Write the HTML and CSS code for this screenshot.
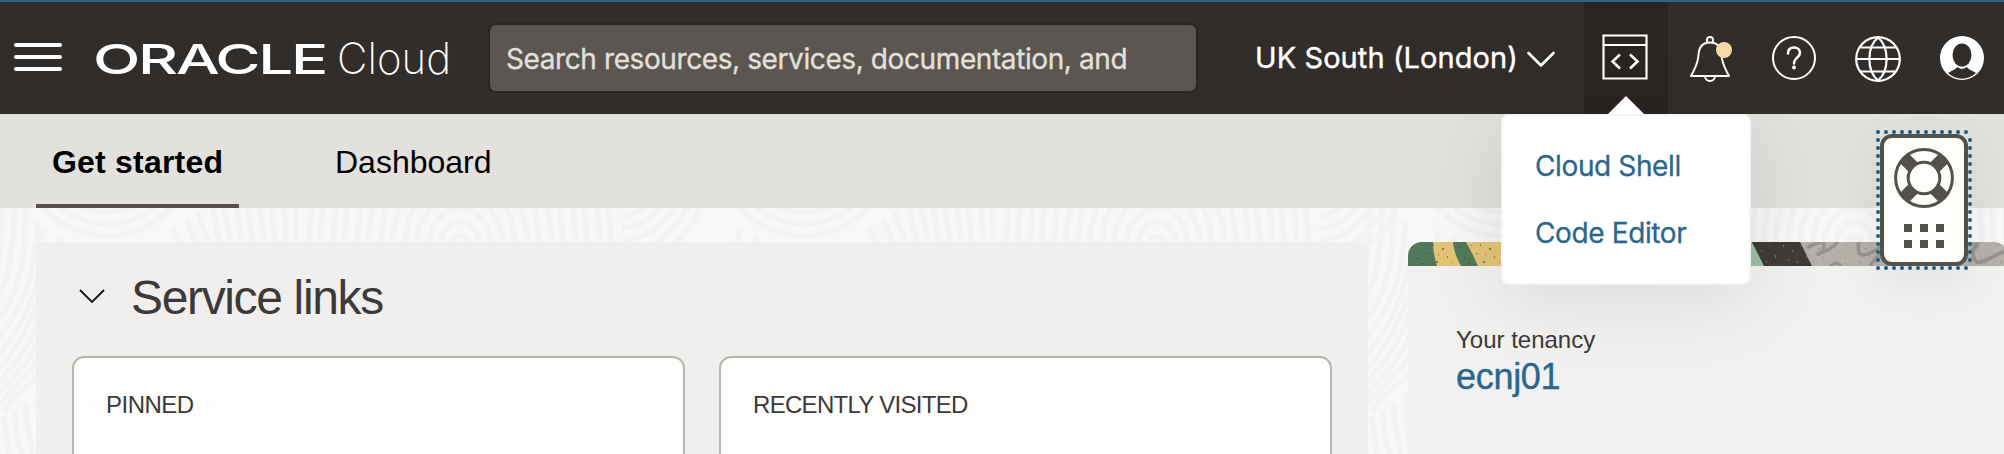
FILE: index.html
```html
<!DOCTYPE html>
<html lang="en">
<head>
<meta charset="utf-8">
<title>Oracle Cloud</title>
<link rel="stylesheet" href="styles.css">
</head>
<body>
<header class="topbar">
  <svg class="menu" width="48" height="28" viewBox="0 0 48 28"><path d="M2 2H46M2 14H46M2 26H46" stroke="#fff" stroke-width="4" stroke-linecap="round"/></svg>
  <svg class="brand" width="360" height="40" viewBox="0 0 360 40">
    <text class="brand-name" x="-3" y="34.500" textLength="233" lengthAdjust="spacingAndGlyphs">ORACLE</text>
    <text class="brand-sub" x="241" y="34.500" textLength="114" lengthAdjust="spacingAndGlyphs">Cloud</text>
  </svg>
  <div class="search">Search resources, services, documentation, and</div>
  <div class="region"><span class="region-name">UK South (London)</span>
    <svg width="28" height="17" viewBox="0 0 28 17"><path d="M1.500 2L14 14.500L26.500 2" fill="none" stroke="#fff" stroke-width="2.600" stroke-linecap="round" stroke-linejoin="round"/></svg>
  </div>
  <nav class="tools">
    <div class="tool tool-active">
      <svg class="code-icon" width="46" height="46" viewBox="0 0 46 46" fill="none" stroke="#fff" stroke-width="2.200"><path d="M1.500 1.500H44.500V44.500H1.500ZM1.500 11H44.500"/><path d="M18 20.500L10.500 27.500L18 34.500M28 20.500L35.500 27.500L28 34.500" stroke-width="2.600"/></svg>
      <div class="popup">
        <svg class="popup-arrow" width="36" height="18" viewBox="0 0 36 18"><path d="M18 0L36 18H0Z" fill="#fff"/></svg>
        <a class="popup-item">Cloud Shell</a>
        <a class="popup-item">Code Editor</a>
      </div>
    </div>
    <div class="tool">
      <svg width="48" height="48" viewBox="0 0 48 48" fill="none" stroke="#fff" stroke-width="2"><path d="M5 42H43C39 34 36 30 35.500 21C35 12 31 8.500 24 8.500S13 12 12.500 21C12 30 9 34 5 42Z" stroke-linejoin="round"/><path d="M21 8.500V6A3 3 0 0 1 27 6V8.500M19 42A5 5 0 0 0 29 42"/><circle cx="38" cy="16" r="8" fill="#f2dca5" stroke="none"/></svg>
    </div>
    <div class="tool">
      <svg width="46" height="46" viewBox="0 0 46 46" fill="none" stroke="#fff"><circle cx="23" cy="23" r="21" stroke-width="2"/><path d="M17 18.500C17 14.500 19.500 12.500 23 12.500S29 14.500 29 18C29 22.500 23 22.500 23 28.500" stroke-width="2.500" stroke-linecap="round"/><circle cx="23" cy="32.500" r="1.900" fill="#fff" stroke="none"/></svg>
    </div>
    <div class="tool">
      <svg width="46" height="48" viewBox="0 0 46 48" fill="none" stroke="#fff" stroke-width="2.200"><circle cx="23" cy="25" r="21.800"/><path d="M1.500 25H44.500M5.500 13.500H40.500M5.500 37.500H40.500"/><path d="M23 3.500C11.500 13 11.500 37 23 46.500C34.500 37 34.500 13 23 3.500Z"/></svg>
    </div>
    <div class="tool">
      <svg width="46" height="46" viewBox="0 0 46 46"><circle cx="23" cy="23" r="22" fill="#fff"/><ellipse cx="23" cy="20" rx="9.500" ry="11.500" fill="#312d2a"/><path d="M9 38C12.500 35.500 16 35 18.500 32C21.500 34.500 24.500 34.500 27.500 32C30 35 33.500 35.500 37 38C29 45.500 17 45.500 9 38Z" fill="#312d2a"/></svg>
    </div>
  </nav>
</header>
<div class="tabs">
  <div class="tab tab-current">Get started</div>
  <div class="tab">Dashboard</div>
</div>
<main class="content">
  <svg class="waves" width="2004" height="246" viewBox="0 208 2004 246">
    <defs>
      <clipPath id="bowl"><path d="M10 200H210L160 242H40Z"/></clipPath>
      <clipPath id="seam"><path d="M622 200H720V242H622Z"/></clipPath>
      <g id="tile" fill="none" stroke="#f4f3f1" stroke-width="5.500">
        <ellipse cx="460" cy="245" rx="7" ry="9"/><ellipse cx="460" cy="245" rx="19" ry="23"/><ellipse cx="460" cy="245" rx="31" ry="37"/><ellipse cx="460" cy="245" rx="43" ry="52"/><ellipse cx="460" cy="245" rx="55" ry="68"/><ellipse cx="460" cy="245" rx="67" ry="86"/><ellipse cx="460" cy="245" rx="79" ry="106"/><ellipse cx="460" cy="245" rx="91" ry="128"/><ellipse cx="460" cy="245" rx="103" ry="150"/><ellipse cx="460" cy="245" rx="115" ry="170"/><ellipse cx="460" cy="245" rx="127" ry="190"/><ellipse cx="460" cy="245" rx="139" ry="210"/><ellipse cx="460" cy="245" rx="151" ry="230"/>
        <path d="M296 208V242M284 208L286 242M272 208L275 242M260 208L264 242M248 208L253 242M236 208L242 242M224 208L231 242M212 208L220 242M198 212L208 242M186 220L196 242M172 228L180 242M44 230L40 242M60 236L58 242"/>
        <g clip-path="url(#bowl)"><circle cx="107" cy="150" r="62"/><circle cx="107" cy="150" r="74"/><circle cx="107" cy="150" r="86"/></g>
        <g clip-path="url(#seam)"><circle cx="620" cy="180" r="36"/><circle cx="620" cy="180" r="48"/><circle cx="620" cy="180" r="60"/><circle cx="620" cy="180" r="72"/><circle cx="620" cy="180" r="84"/></g>
      </g>
      <g id="gutter" fill="none" stroke="#f4f3f1" stroke-width="5.500">
        <path d="M2 208C2 240 0 260 -8 280M14 208C14 255 8 285 -8 306M26 208C26 265 16 305 -8 326M37 222C36 275 22 315 -8 343M42 262C34 300 20 335 -8 360M42 290C32 322 18 350 -8 376M42 314C30 342 16 366 -8 390M42 336C30 360 14 378 -8 400M42 356C26 376 14 388 -4 408M42 374C26 388 14 394 4 412M4 416C4 432 8 444 10 456M14 410C16 430 18 444 22 456M26 402C26 425 30 440 33 456M38 392C37 420 40 440 44 456"/>
      </g>
    </defs>
    <use href="#tile"/><use href="#tile" x="697"/><use href="#tile" x="1395"/>
    <use href="#gutter"/><use href="#gutter" x="1368"/>
  </svg>
  <section class="panel">
    <div class="panel-head">
      <svg width="28" height="16" viewBox="0 0 28 16"><path d="M2 2L14 14L26 2" fill="none" stroke="#161513" stroke-width="1.900"/></svg>
      <h2 class="panel-title">Service links</h2>
    </div>
    <div class="cards">
      <div class="card card-pinned">PINNED</div>
      <div class="card card-recent">RECENTLY VISITED</div>
    </div>
  </section>
  <aside class="tenancy">
    <svg class="banner" width="600" height="24" viewBox="0 0 600 24">
      <defs>
        <pattern id="specks" width="47" height="24" patternUnits="userSpaceOnUse"><path d="M3 5h2v1h-2zM9 15h1v2h-1zM16 3h1v1h-1zM21 11h2v1h-2zM28 19h2v2h-2zM34 6h2v2h-2zM39 14h1v2h-1zM44 20h1v1h-1zM13 21h2v1h-2zM30 12h1v1h-1zM25 2h1v2h-1zM6 10h1v1h-1z" fill="#3b3629" opacity=".5"/></pattern>
        <pattern id="flecks" width="31" height="24" patternUnits="userSpaceOnUse"><path d="M3 3h1v2h-1zM12 8h1v2h-1zM20 4h1v1h-1zM26 13h1v3h-1zM8 17h1v2h-1zM17 19h1v2h-1z" fill="#9a958f" opacity=".6"/></pattern>
      </defs>
      <path d="M0 0H350V24H0Z" fill="#50795a"/>
      <path d="M25 0H45C46 9 49 17 53 24H29C27 17 25 9 25 0ZM58 0H100V24H70C66 15 62 7 58 0Z" fill="#e3c477"/>
      <path d="M0 0H100V24H0Z" fill="url(#specks)"/>
      <path d="M330 0H344L357 24H330Z" fill="#9bbfa5"/>
      <path d="M391 0H600V24H391Z" fill="#b4b0aa"/>
      <path d="M399 6C410 0 416 -2 416 4C416 12 406 14 412 11C420 9 426 4 430 0M422 25Q429 17 433 25M451 0C446 24 468 9 478 0M462 24C474 4 490 5 505 1M565 0C540 8 525 24 548 16S572 0 568 2S563 23 573 20S588 12 600 8" fill="none" stroke="#97938e" stroke-width="3.500"/>
      <path d="M391 0H600V24H391Z" fill="url(#specks)" opacity=".3"/>
      <path d="M344 0H392Q398 12 404 24H356Z" fill="#3e3b38"/>
      <path d="M344 0H392Q398 12 404 24H356Z" fill="url(#flecks)"/>
    </svg>
    <div class="tenancy-body">
      <div class="tenancy-label">Your tenancy</div>
      <a class="tenancy-name">ecnj01</a>
    </div>
  </aside>
</main>
<div class="helper">
  <svg class="helper-outline" width="96" height="140" viewBox="0 0 96 140"><path d="M2 2H94M2 138H94" /><path d="M2 10V137M94 10V137"/></svg>
  <svg width="60" height="60" viewBox="0 0 60 60" fill="none" stroke="#54514b">
    <path d="M10.500 10.500L19.500 19.500M49.500 10.500L40.500 19.500M10.500 49.500L19.500 40.500M49.500 49.500L40.500 40.500" stroke-width="13"/>
    <circle cx="30" cy="30" r="28.400" stroke-width="3"/>
    <circle cx="30" cy="30" r="15.800" fill="#fdfdfb" stroke-width="3"/>
  </svg>
  <svg width="40" height="24" viewBox="0 0 40 24"><path d="M0 0h8v8h-8zM16 0h8v8h-8zM32 0h8v8h-8zM0 16h8v8h-8zM16 16h8v8h-8zM32 16h8v8h-8z" fill="#54514b"/></svg>
</div>
</body>
</html>
```
FILE: styles.css
```css
* { box-sizing: border-box; }

body {
  margin: 0;
  width: 2004px;
  height: 454px;
  overflow: hidden;
  position: relative;
  display: flex;
  flex-direction: column;
  background: #f9f8f6;
  font-family: "Liberation Sans", Arial, sans-serif;
  color: #3b3a38;
}

svg { display: block; flex: none; }

.topbar {
  flex: none;
  height: 114px;
  display: flex;
  align-items: center;
  background: #312d2a;
  border-top: 2px solid #2b658a;
  font-family: Inter, sans-serif;
}

.menu { margin: -2px 0 0 14px; }

.brand { margin: 2px 0 0 34px; overflow: visible; }

.brand-name { font: 500 41px Inter, sans-serif; letter-spacing: -1.5px; fill: #fff; }

.brand-sub { font: 200 43px Inter, sans-serif; fill: #fff; }

.search {
  width: 706px;
  height: 66px;
  margin: 0 0 0 34px;
  padding-left: 16px;
  border-radius: 6px;
  background: #5b5652;
  box-shadow: 0 0 0 2px #2a2623;
  color: #e2e0dc;
  font-size: 28px;
  -webkit-text-stroke: 0.3px;
  line-height: 68px;
  white-space: nowrap;
  letter-spacing: -0.4px;
}

.region {
  display: flex;
  align-items: center;
  width: 329px;
  margin: 2px 0 0 59px;
  color: #fff;
  font-size: 29px;
  -webkit-text-stroke: 0.4px;
}

.region-name { white-space: nowrap; width: 272px; margin-top: -4px; letter-spacing: 0.08px; }

.tools { display: flex; height: 112px; }

.tool {
  position: relative;
  width: 84px;
  display: flex;
  align-items: center;
  justify-content: center;
}

.tool-active { background: #2a2522; }

.code-icon { margin: -2px 2px 0 0; }

.popup {
  position: absolute;
  z-index: 2;
  top: 112px;
  left: -83px;
  width: 250px;
  height: 171px;
  padding: 17px 0 0 32px;
  background: #fff;
  border: 2px solid #f6f5f4;
  border-radius: 8px;
  box-shadow: 0 12px 80px rgba(0, 0, 0, 0.1);
}

.popup-arrow { position: absolute; top: -20px; left: 105px; }

.popup-item {
  display: block;
  height: 67px;
  line-height: 67px;
  color: #2a678b;
  font-size: 28px;
  -webkit-text-stroke: 0.3px;
  letter-spacing: -0.38px;
}

.tabs {
  flex: none;
  display: flex;
  gap: 60px;
  height: 94px;
  padding-left: 36px;
  background: #e2e1dd;
  color: #000;
  font-size: 32px;
}

.tab { padding: 0 36px; line-height: 97px; }

.tab-current {
  width: 203px;
  padding: 0 0 0 16px;
  font-weight: bold;
  letter-spacing: 0.2px;
  border-bottom: 4px solid #54504a;
  white-space: nowrap;
}

.content {
  flex: 1;
  position: relative;
  display: flex;
  gap: 40px;
  padding: 34px 0 0 36px;
}

.waves { position: absolute; top: 0; left: 0; }

.panel {
  position: relative;
  flex: none;
  width: 1332px;
  height: 212px;
  padding: 30px 36px 0;
  background: #f0efed;
  border-radius: 8px 8px 0 0;
  overflow: hidden;
}

.panel-head { display: flex; align-items: center; gap: 25px; height: 84px; padding: 0 0 0 6px; }

.panel-head svg { margin-top: -36px; }

.panel-title {
  margin: -34px 0 0;
  font-size: 48px;
  font-weight: normal;
  letter-spacing: -1.35px;
}

.cards { display: flex; gap: 34px; }

.card {
  width: 613px;
  height: 140px;
  padding: 33px 0 0 32px;
  background: #fdfdfb;
  border: 2px solid #b9b5b0;
  border-radius: 12px;
  font-size: 24px;
}

.card-pinned { letter-spacing: -0.5px; }

.card-recent { letter-spacing: -0.7px; }

.tenancy {
  position: relative;
  flex: none;
  width: 600px;
  height: 212px;
  background: #f2f1f0;
  border-radius: 14px 14px 0 0;
  overflow: hidden;
}

.tenancy-body { padding: 59px 0 0 48px; }

.tenancy-label { font-size: 24px; line-height: 30px; letter-spacing: 0; }

.tenancy-name { display: block; color: #2a678b; font-size: 36px; line-height: 43px; letter-spacing: -0.3px; -webkit-text-stroke: 0.4px; }

.helper {
  position: absolute;
  z-index: 3;
  left: 1880px;
  top: 134px;
  width: 88px;
  height: 132px;
  display: flex;
  flex-direction: column;
  align-items: center;
  gap: 16px;
  padding-top: 10px;
  background: #fdfdfb;
  border: 4px solid #54514b;
  border-radius: 12px;
  box-shadow: 0 12px 48px rgba(0, 0, 0, 0.08);
}

.helper-outline {
  position: absolute;
  left: -8px;
  top: -8px;
  fill: none;
  stroke: #1f5b80;
  stroke-width: 4;
  stroke-linecap: round;
  stroke-dasharray: 0.01 7.99;
}
```
